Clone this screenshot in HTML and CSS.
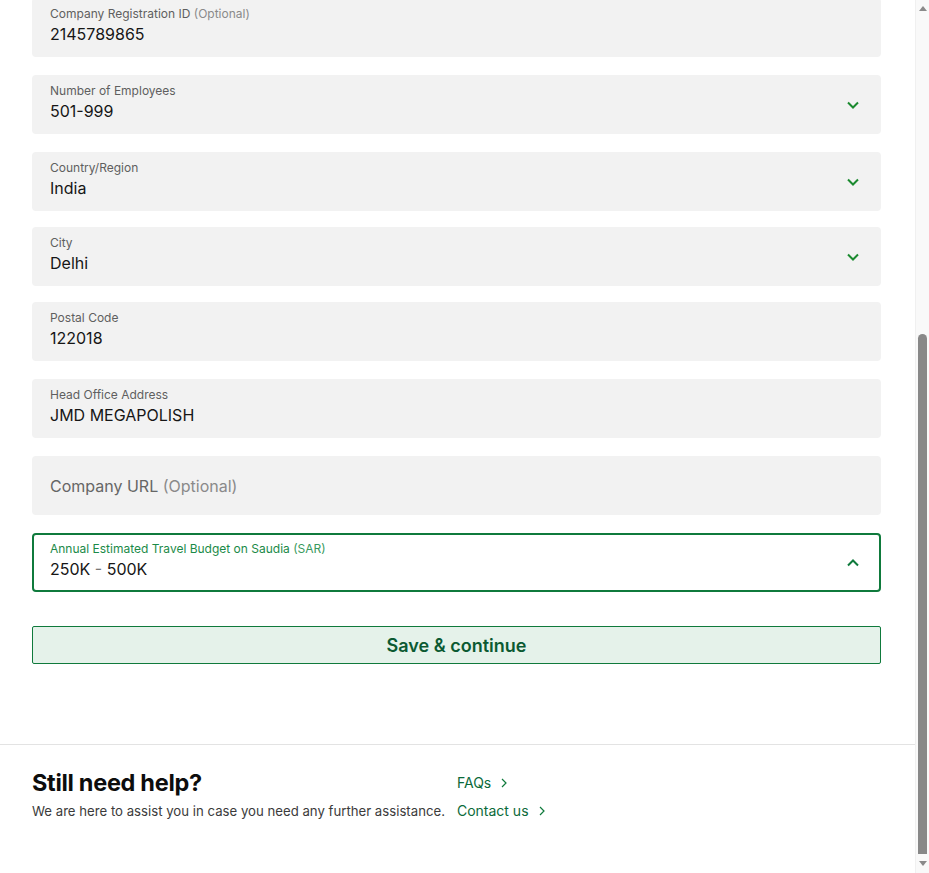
FILE: index.html
```html
<!DOCTYPE html>
<html lang="en">
<head>
<meta charset="utf-8">
<title>Company details</title>
<link rel="stylesheet" href="styles.css">
</head>
<body>
<div class="page">
  <div class="main">
    <form class="form">
      <div class="field first">
        <div class="text"><span class="label">Company Registration ID <span class="opt">(Optional)</span></span><span class="value">2145789865</span></div>
      </div>
      <div class="field">
        <div class="text"><span class="label">Number of Employees</span><span class="value">501-999</span></div>
        <svg class="chev" viewBox="0 0 12 8" width="12" height="8"><path d="M1 1.5 6 6.5 11 1.5" fill="none" stroke="#1b8a2f" stroke-width="2"/></svg>
      </div>
      <div class="field">
        <div class="text"><span class="label">Country/Region</span><span class="value">India</span></div>
        <svg class="chev" viewBox="0 0 12 8" width="12" height="8"><path d="M1 1.5 6 6.5 11 1.5" fill="none" stroke="#1b8a2f" stroke-width="2"/></svg>
      </div>
      <div class="field tight">
        <div class="text"><span class="label">City</span><span class="value">Delhi</span></div>
        <svg class="chev" viewBox="0 0 12 8" width="12" height="8"><path d="M1 1.5 6 6.5 11 1.5" fill="none" stroke="#1b8a2f" stroke-width="2"/></svg>
      </div>
      <div class="field tight">
        <div class="text"><span class="label">Postal Code</span><span class="value">122018</span></div>
      </div>
      <div class="field">
        <div class="text"><span class="label">Head Office Address</span><span class="value">JMD MEGAPOLISH</span></div>
      </div>
      <div class="field empty">
        <div class="text"><span class="placeholder">Company URL <span class="opt">(Optional)</span></span></div>
      </div>
      <div class="field active">
        <div class="text"><span class="label">Annual Estimated Travel Budget on Saudia <span class="opt">(SAR)</span></span><span class="value">250K <span class="dash">-</span> 500K</span></div>
        <svg class="chev" viewBox="0 0 12 8" width="12" height="8"><path d="M1 6.5 6 1.5 11 6.5" fill="none" stroke="#0f7a3c" stroke-width="2"/></svg>
      </div>
      <button type="button" class="save">Save &amp; continue</button>
    </form>
    <footer class="help">
      <div class="help-text">
        <h2>Still need help?</h2>
        <p>We are here to assist you in case you need any further assistance.</p>
      </div>
      <div class="help-links">
        <a class="link">FAQs <svg viewBox="0 0 6 10" width="6" height="10"><path d="M1 1 5 5 1 9" fill="none" stroke="#0f7a3c" stroke-width="1.2"/></svg></a>
        <a class="link">Contact us <svg viewBox="0 0 6 10" width="6" height="10"><path d="M1 1 5 5 1 9" fill="none" stroke="#0f7a3c" stroke-width="1.2"/></svg></a>
      </div>
    </footer>
  </div>
  <div class="scrollbar">
    <div class="arrow up"></div>
    <div class="track"><div class="thumb"></div></div>
    <div class="arrow down"></div>
  </div>
</div>
</body>
</html>
```
FILE: styles.css
```css
* { box-sizing: border-box; }
html, body { margin: 0; padding: 0; background: #fff; }
body {
  font-family: Inter, "Noto Sans", sans-serif;
  color: #1a1a1a;
}
.page {
  display: flex;
  height: 873px;
  overflow: hidden;
}
.main {
  flex: 1;
  min-width: 0;
  display: flex;
  flex-direction: column;
}
.form {
  display: flex;
  flex-direction: column;
  gap: 18px;
  padding: 0 34px 0 32px;
}
.field {
  height: 59px;
  background: #f2f2f2;
  border-radius: 4px;
  display: flex;
  align-items: center;
  padding: 0 22px 0 18px;
}
.field.first { margin-top: -2px; }
.field.tight { margin-top: -2px; }
.text {
  flex: 1;
  display: flex;
  flex-direction: column;
}
.label {
  font-size: 12px;
  line-height: 16px;
  color: #5f5f5f;
  margin-top: -4px;
}
.opt { color: #8a8a8a; }
.value {
  font-size: 16px;
  line-height: 22px;
  color: #161616;
  margin-top: 1px;
}
.dash { color: #777; }
.placeholder {
  font-size: 16px;
  color: #666;
}
.chev { flex: none; }
.field.active {
  background: #fff;
  border: 2px solid #0f7a3c;
  padding: 0 20px 0 16px;
}
.field.active .label { color: #1b8a48; }
.field.active .opt { color: #3a9a5e; }
.save {
  margin-top: 16px;
  height: 38px;
  background: #e5f2ea;
  border: 1px solid #0f7a3c;
  border-radius: 2px;
  font-family: inherit;
  font-size: 18px;
  font-weight: 600;
  color: #0b5a32;
  cursor: pointer;
}
.help {
  margin-top: 80px;
  border-top: 1px solid #e3e3e3;
  padding: 22px 32px 0;
  display: flex;
  gap: 12px;
}
.help-text h2 {
  margin: 0;
  font-size: 23.5px;
  line-height: 32px;
  font-weight: 700;
  letter-spacing: -0.3px;
  color: #0d0d0d;
}
.help-text p {
  margin: 2px 0 0;
  font-size: 13.2px;
  line-height: 20px;
  color: #3b3b3b;
}
.help-links {
  display: flex;
  flex-direction: column;
  padding-top: 6px;
  gap: 8px;
}
.link {
  display: flex;
  align-items: center;
  gap: 10px;
  font-size: 14px;
  line-height: 20px;
  color: #0b6a3a;
  text-decoration: none;
}
.scrollbar {
  flex: none;
  width: 14px;
  background: #f9f9f9;
  border-left: 1px solid #f0f0f0;
  display: flex;
  flex-direction: column;
  align-items: center;
}
.arrow {
  width: 0;
  height: 0;
  border-left: 4px solid transparent;
  border-right: 4px solid transparent;
  flex: none;
}
.arrow.up {
  margin-top: 6px;
  border-bottom: 5px solid #8a8a8a;
}
.arrow.down {
  margin: 4px 0 7px;
  border-top: 5px solid #8a8a8a;
}
.track {
  flex: 1;
  width: 100%;
  display: flex;
  flex-direction: column;
  justify-content: flex-end;
  align-items: center;
}
.thumb {
  width: 9px;
  height: 520px;
  background: #888;
  border-radius: 5px 5px 0 0;
  margin-bottom: 3px;
}
```
